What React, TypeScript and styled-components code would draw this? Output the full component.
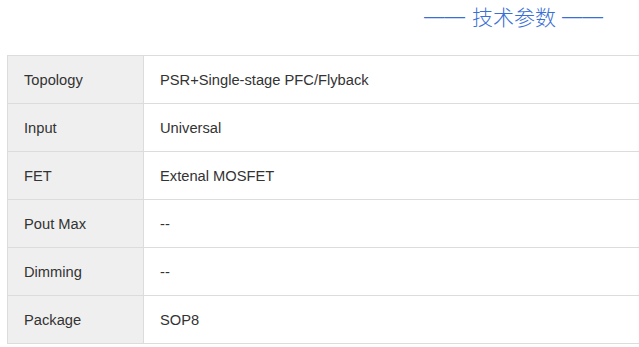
import React from "react";
import styled, { createGlobalStyle } from "styled-components";

const Global = createGlobalStyle`
  html, body { margin: 0; padding: 0; background: #fff; overflow: hidden; }
  body { font-family: "Liberation Sans", Arial, "Noto Sans CJK SC", sans-serif; }
`;

const Page = styled.div`
  width: 639px;
  height: 347px;
  overflow: hidden;
  padding: 0 0 0 7px;
  box-sizing: border-box;
`;

const HeadRow = styled.div`
  height: 55px;
  padding: 1px 0 0 417px;
  box-sizing: border-box;
`;

const Heading = styled.h2`
  margin: 0;
  font-weight: 300;
  font-size: 21px;
  line-height: 30px;
  color: #3a6fd6;
  white-space: nowrap;
  font-family: "Noto Sans CJK SC", sans-serif;
  display: flex;
  align-items: center;
`;

const Dash = styled.span`
  font-family: "Liberation Sans", sans-serif;
  font-size: 20.5px;
  line-height: 30px;
`;

const Title = styled.span`
  margin: 0 6px 0 7px;
`;

const Table = styled.table`
  border-collapse: collapse;
  width: 660px;
  font-size: 14.7px;
  color: #333;
`;

const Row = styled.tr`
  height: 48px;
`;

const Label = styled.td`
  width: 136px;
  box-sizing: border-box;
  background: #efefef;
  border: 1px solid #dcdcdc;
  padding: 0 0 0 16px;
  vertical-align: middle;
`;

const Value = styled.td`
  border: 1px solid #dcdcdc;
  padding: 0 0 0 16px;
  vertical-align: middle;
`;

const rows: [string, string][] = [
  ["Topology", "PSR+Single-stage PFC/Flyback"],
  ["Input", "Universal"],
  ["FET", "Extenal MOSFET"],
  ["Pout Max", "--"],
  ["Dimming", "--"],
  ["Package", "SOP8"],
];

export default function App() {
  return (
    <>
      <Global />
      <Page>
        <HeadRow>
          <Heading>
            <Dash>——</Dash>
            <Title>技术参数</Title>
            <Dash>——</Dash>
          </Heading>
        </HeadRow>
        <Table>
          <tbody>
            {rows.map(([k, v]) => (
              <Row key={k}>
                <Label>{k}</Label>
                <Value>{v}</Value>
              </Row>
            ))}
          </tbody>
        </Table>
      </Page>
    </>
  );
}
